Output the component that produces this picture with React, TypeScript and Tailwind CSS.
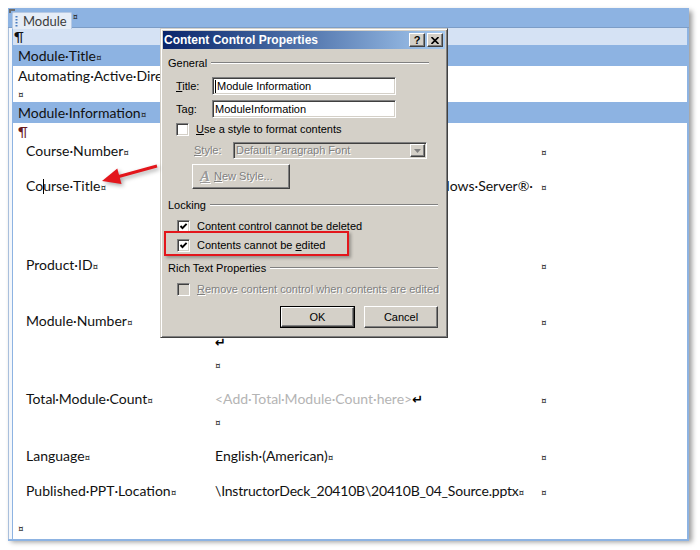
import React from "react";

const docFont = "font-['Lato',sans-serif]";
const uiFont = "font-['Liberation_Sans',Arial,sans-serif]";

// classic 3D bevels
const raised =
  "border border-t-white border-l-white border-b-[#404040] border-r-[#404040] shadow-[inset_-1px_-1px_0_#808080]";
const sunken =
  "border border-t-[#808080] border-l-[#808080] border-b-white border-r-white shadow-[inset_1px_1px_0_#404040,inset_-1px_-1px_0_#d4d0c8]";

function Cell() {
  return <span className="text-[10px] text-[#222]">¤</span>;
}

function Ret() {
  return <span className="font-['DejaVu_Sans',sans-serif] text-[13px] font-bold text-black">↵</span>;
}

type InfoRow = {
  label: string;
  h: string;
  value: React.ReactNode;
};

const rows: InfoRow[] = [
  { label: "Course·Number", h: "h-[35px]", value: null },
  {
    label: "Course·Title",
    h: "h-[79px]",
    value: (
      <div className="flex justify-end overflow-hidden whitespace-nowrap pr-[8px]">
        Installing·and·Configuring·Windows·Server®·
      </div>
    ),
  },
  { label: "Product·ID", h: "h-[56px]", value: null },
  {
    label: "Module·Number",
    h: "h-[78px]",
    value: (
      <>
        <div className="h-[21px]" />
        <div><Ret /></div>
        <div><Cell /></div>
      </>
    ),
  },
  {
    label: "Total·Module·Count",
    h: "h-[57px]",
    value: (
      <>
        <div>
          <span className="text-[#b4b4b4]">&lt;Add·Total·Module·Count·here&gt;</span>
          <Ret />
        </div>
        <div><Cell /></div>
      </>
    ),
  },
  { label: "Language", h: "h-[35px]", value: <div>English·(American)<Cell /></div> },
  {
    label: "Published·PPT·Location",
    h: "h-[36px]",
    value: <div className="tracking-[-0.2px]">\InstructorDeck_20410B\20410B_04_Source.pptx<Cell /></div>,
  },
];

function Check({ checked, disabled }: { checked?: boolean; disabled?: boolean }) {
  return (
    <div
      className={`flex h-[13px] w-[13px] shrink-0 items-center justify-center ${sunken} ${
        disabled ? "bg-[#d4d0c8]" : "bg-white"
      }`}
    >
      {checked ? (
        <svg width="9" height="9" viewBox="0 0 9 9">
          <path d="M1.5 4 L3.5 6.2 L7.6 1.8" fill="none" stroke="#000" strokeWidth="1.9" />
        </svg>
      ) : null}
    </div>
  );
}

function GroupHeader({ label, lineClass }: { label: string; lineClass: string }) {
  return (
    <div className="flex h-[14px] items-center pl-[5px]">
      <span className="whitespace-nowrap">{label}</span>
      <div className={`ml-[4px] h-[2px] flex-1 border-t border-b border-t-[#808080] border-b-white ${lineClass}`} />
    </div>
  );
}

function PropertiesDialog() {
  const dim = "text-[#808080] [text-shadow:1px_1px_0_#fff]";
  return (
    <div
      className={`absolute top-[28px] left-[160px] flex h-[310px] w-[288px] flex-col border border-t-[#d4d0c8] border-l-[#d4d0c8] border-r-[#404040] border-b-[#404040] bg-[#d4d0c8] p-[2px] text-[11px] text-black shadow-[inset_1px_1px_0_#fff,inset_-1px_-1px_0_#808080] ${uiFont}`}
    >
      <div className="flex h-[18px] items-center bg-gradient-to-r from-[#0a246a] to-[#a6caf0] pr-[2px] pl-[1px]">
        <span className="flex-1 text-[12px] font-bold text-white">Content Control Properties</span>
        <div className={`flex h-[14px] w-[16px] items-center justify-center bg-[#d4d0c8] text-[11px] font-bold ${raised}`}>
          ?
        </div>
        <div className={`ml-[2px] flex h-[14px] w-[16px] items-center justify-center bg-[#d4d0c8] ${raised}`}>
          <svg width="8" height="7" viewBox="0 0 8 7">
            <path d="M0.5 0 L7.5 7 M7.5 0 L0.5 7" stroke="#000" strokeWidth="1.6" />
          </svg>
        </div>
      </div>

      <div className="mt-[7px]">
        <GroupHeader label="General" lineClass="mr-[16px]" />
      </div>

      <div className="mt-[7px] flex h-[18px] items-center pl-[13px]">
        <span className="w-[36px]">
          <span className="underline">T</span>itle:
        </span>
        <div className={`flex h-[18px] w-[184px] items-center bg-white pl-[2px] ${sunken}`}>
          <span className="mr-[1px] h-[13px] w-px bg-black" />
          Module Information
        </div>
      </div>

      <div className="mt-[5px] flex h-[18px] items-center pl-[13px]">
        <span className="w-[36px]">
          Ta<span className="underline">g</span>:
        </span>
        <div className={`flex h-[18px] w-[184px] items-center bg-white pl-[2px] ${sunken}`}>
          ModuleInformation
        </div>
      </div>

      <div className="mt-[4px] flex h-[15px] items-center gap-[7px] pl-[13px]">
        <Check />
        <span>
          <span className="underline">U</span>se a style to format contents
        </span>
      </div>

      <div className="mt-[5px] flex h-[17px] items-center pl-[31px]">
        <span className={`w-[39px] ${dim}`}>
          <span className="underline">S</span>tyle:
        </span>
        <div className={`flex h-[17px] w-[194px] items-center bg-[#d4d0c8] pl-[2px] ${sunken}`}>
          <span className={`flex-1 ${dim}`}>Default Paragraph Font</span>
          <div className={`mr-[1px] flex h-[13px] w-[15px] items-center justify-center ${raised}`}>
            <svg width="7" height="4" viewBox="0 0 7 4">
              <path d="M0 0 H7 L3.5 4 Z" fill="#808080" />
            </svg>
          </div>
        </div>
      </div>

      <div className={`mt-[5px] ml-[29px] flex h-[25px] w-[98px] items-center gap-[4px] pl-[7px] ${raised}`}>
        <span className="font-['Liberation_Serif',serif] text-[15px] leading-none font-bold text-[#9a9a9a] italic underline [text-shadow:1px_1px_0_#fff]">
          A
        </span>
        <span className={dim}>
          <span className="underline">N</span>ew Style...
        </span>
      </div>

      <div className="mt-[9px]">
        <GroupHeader label="Locking" lineClass="mr-[7px]" />
      </div>

      <div className="mt-[7px] flex h-[14px] items-center gap-[7px] pl-[14px]">
        <Check checked />
        <span>Content control cannot be deleted</span>
      </div>

      <div className="relative mt-[5px] flex h-[14px] items-center gap-[7px] pl-[14px]">
        <Check checked />
        <span>
          Contents cannot be <span className="underline">e</span>dited
        </span>
        <div className="absolute top-[-7px] left-[1px] h-[25px] w-[185px] border-2 border-[#e3161c] shadow-[2px_2px_3px_rgba(0,0,0,0.3)]" />
      </div>

      <div className="mt-[9px]">
        <GroupHeader label="Rich Text Properties" lineClass="mr-[7px]" />
      </div>

      <div className="mt-[7px] flex h-[14px] items-center gap-[7px] pl-[14px]">
        <Check disabled />
        <span className={dim}>
          <span className="underline">R</span>emove content control when contents are edited
        </span>
      </div>

      <div className="mt-[10px] flex justify-end gap-[9px] pr-[7px]">
        <div className="h-[22px] w-[75px] border border-black">
          <div className={`flex h-full w-full items-center justify-center ${raised}`}>OK</div>
        </div>
        <div className={`flex h-[22px] w-[74px] items-center justify-center ${raised}`}>Cancel</div>
      </div>
    </div>
  );
}

function DocumentFrame() {
  return (
    <div className={`mt-[8px] ml-[8px] flex h-[531px] w-[681px] flex-col bg-white text-[14px] text-[#111] shadow-[3px_3px_5px_rgba(0,0,0,0.4)] ${docFont}`}>
      {/* content control title strip */}
      <div className="relative flex h-[20px] shrink-0 items-end border-b border-[#7c9dc7] bg-[#8db3e2] pl-[4px]">
        <span className="absolute top-[1px] left-[1px] h-[4px] w-[6px] border-t-2 border-l-2 border-[#6d6d6d]" />
        <div className="mb-[-2px] flex h-[17px] items-center gap-[5px] rounded-t-[2px] border border-b-0 border-[#b6c9e4] bg-[#e6edf7] pr-[4px] pl-[2px]">
          <svg width="3" height="12" viewBox="0 0 3 12">
            {[1, 4, 7, 10].map((y) => (
              <rect key={y} x="0.5" y={y} width="2" height="1.5" fill="#4a7cc0" />
            ))}
          </svg>
          <span className="text-[13px] leading-none text-[#3c3c3c]">Module</span>
        </div>
        <span className="mb-[6px] ml-[1px] text-[9px] leading-none text-[#222]">¤</span>
      </div>

      <div className="flex flex-1 border-b-2 border-[#8db3e2]">
        <div className="w-[5px] shrink-0 border-r border-l border-r-[#8db3e2] border-l-[#a9bfdc] bg-[#f4f7fb]" />
        <div className="flex flex-1 flex-col border-r-2 border-[#8db3e2]">
          <div className="h-[17px] bg-[#d5e2f4] pl-[1px] leading-[17px]">¶</div>
          <div className="h-[21px] bg-[#8db3e2] pl-[5px] leading-[21px]">
            Module·Title<Cell />
          </div>
          <div className="h-[36px] pl-[5px] leading-[17px]">
            <div className="pt-[0.5px]">Automating·Active·Directory·Domain·Services</div>
            <div><Cell /></div>
          </div>
          <div className="h-[21px] bg-[#8db3e2] pl-[5px] leading-[21px]">
            Module·Information<Cell />
          </div>
          <div className="h-[17px] pl-[5px] leading-[17px] text-[#6a1c1c]">¶</div>

          {rows.map((row) => (
            <div key={row.label} className={`flex ${row.h} leading-[21px]`}>
              <div className="w-[202px] shrink-0 pl-[13px]">
                {row.label === "Course·Title" ? (
                  <>
                    Co<span className="mr-[-1px] inline-block h-[15px] w-px translate-y-[3px] bg-black" />urse·Title
                  </>
                ) : (
                  row.label
                )}
                <Cell />
              </div>
              <div className="w-[326px] shrink-0">{row.value}</div>
              <div>
                <Cell />
              </div>
            </div>
          ))}

          <div className="pl-[5px] leading-[21px]">
            <Cell />
          </div>
        </div>
      </div>
    </div>
  );
}

export default function App() {
  return (
    <div className="relative h-[550px] w-[700px] overflow-hidden bg-white">
      <DocumentFrame />
      <PropertiesDialog />

      {/* red callout arrow */}
      <svg
        className="pointer-events-none absolute top-0 left-0 drop-shadow-[2px_2px_2px_rgba(0,0,0,0.35)]"
        width="700"
        height="550"
      >
        <line x1="157" y1="166" x2="117" y2="177" stroke="#e3161c" strokeWidth="3" />
        <polygon points="102,181 117.3,168.6 121.5,184" fill="#e3161c" />
      </svg>
    </div>
  );
}
